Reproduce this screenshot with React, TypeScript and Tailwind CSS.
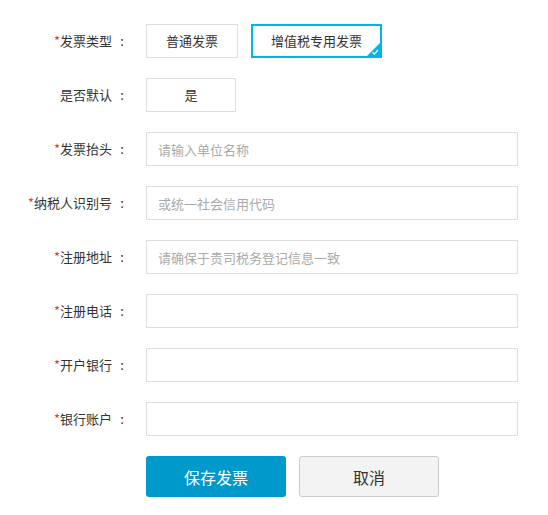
import React, { useState } from 'react';

const font = { fontFamily: '"Microsoft YaHei", "Noto Sans CJK SC", sans-serif' };

const fields = [
    { label: '发票抬头', placeholder: '请输入单位名称' },
    { label: '纳税人识别号', placeholder: '或统一社会信用代码' },
    { label: '注册地址', placeholder: '请确保于贵司税务登记信息一致' },
    { label: '注册电话', placeholder: '' },
    { label: '开户银行', placeholder: '' },
    { label: '银行账户', placeholder: '' },
];

const Label = ({ text, required }: { text: string; required?: boolean }) => (
    <div className="w-[146px] shrink-0 pr-[14px] text-right text-[13px] text-[#333]">
        {required && <span className="text-[#e4393c]">*</span>}
        {text}
        <span className="inline-block w-[20px] text-center">:</span>
    </div>
);

const App = () => {
    const [type, setType] = useState<'normal' | 'vat'>('vat');

    const typeBtn = (key: 'normal' | 'vat', text: string, width: string) => {
        const active = type === key;
        return (
            <button
                type="button"
                onClick={() => setType(key)}
                className={`relative flex h-[34px] ${width} items-center justify-center overflow-hidden bg-white text-[13px] text-[#333] ${active ? 'border-2 border-[#00b4f0]' : 'border border-[#ddd]'}`}
            >
                {text}
                {active && (
                    <span className="absolute right-0 bottom-0 h-[13px] w-[13px]">
                        <svg width="13" height="13" viewBox="0 0 13 13">
                            <polygon points="13,0 13,13 0,13" fill="#00b4f0" />
                            <path d="M5.5 9.2 L7.5 11 L11 7" stroke="#fff" strokeWidth="1.3" fill="none" />
                        </svg>
                    </span>
                )}
            </button>
        );
    };

    return (
        <div className="min-h-[515px] w-[548px] bg-white pt-[24px]" style={font}>
            <form className="flex flex-col gap-[20px]" onSubmit={(e) => e.preventDefault()}>
                <div className="flex items-center">
                    <Label text="发票类型" required />
                    <div className="flex gap-[13px]">
                        {typeBtn('normal', '普通发票', 'w-[92px]')}
                        {typeBtn('vat', '增值税专用发票', 'w-[131px]')}
                    </div>
                </div>
                <div className="flex items-center">
                    <Label text="是否默认" />
                    <div className="flex h-[34px] w-[90px] items-center justify-center border border-[#ddd] text-[13px] text-[#333]">
                        是
                    </div>
                </div>
                {fields.map((f) => (
                    <div key={f.label} className="flex items-center">
                        <Label text={f.label} required />
                        <input
                            type="text"
                            placeholder={f.placeholder}
                            className="h-[34px] w-[372px] border border-[#ddd] px-[11px] text-[13px] text-[#333] outline-none placeholder:text-[#aaa]"
                        />
                    </div>
                ))}
                <div className="flex gap-[13px] pl-[146px]">
                    <button className="h-[41px] w-[140px] rounded-[3px] bg-[#0099cc] text-[16px] text-white">
                        保存发票
                    </button>
                    <button type="button" className="h-[41px] w-[140px] rounded-[3px] border border-[#ccc] bg-[#f3f3f3] text-[16px] text-[#333]">
                        取消
                    </button>
                </div>
            </form>
        </div>
    );
};

export default App;
